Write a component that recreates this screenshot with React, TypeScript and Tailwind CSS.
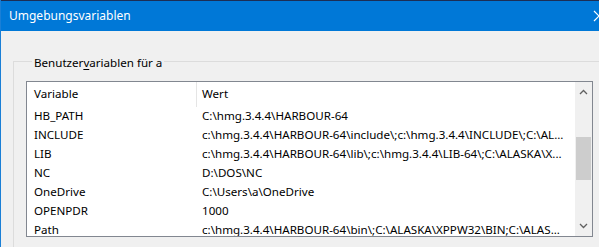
import React from "react";

const rows: [string, string][] = [
  ["HB_PATH", "C:\\hmg.3.4.4\\HARBOUR-64"],
  ["INCLUDE", "c:\\hmg.3.4.4\\HARBOUR-64\\include\\;c:\\hmg.3.4.4\\INCLUDE\\;C:\\AL..."],
  ["LIB", "c:\\hmg.3.4.4\\HARBOUR-64\\lib\\;c:\\hmg.3.4.4\\LIB-64\\;C:\\ALASKA\\X..."],
  ["NC", "D:\\DOS\\NC"],
  ["OneDrive", "C:\\Users\\a\\OneDrive"],
  ["OPENPDR", "1000"],
  ["Path", "c:\\hmg.3.4.4\\HARBOUR-64\\bin\\;C:\\ALASKA\\XPPW32\\BIN;C:\\ALAS..."],
];

export default function App() {
  return (
    <div
      className="w-[599px] h-[247px] overflow-hidden bg-[#f0f0f0] flex flex-col border-l border-[#1a7fd6] text-[11.6px] text-black"
      style={{ fontFamily: '"Noto Sans", "Open Sans", sans-serif' }}
    >
      <div className="h-px bg-[#1c2e55] shrink-0" />
      <div className="h-[30px] shrink-0 bg-[#0078d7] flex items-center justify-between pl-[8px] text-white text-[12px] relative">
        <span className="leading-none">Umgebungsvariablen</span>
        <svg className="absolute right-[-6px] top-[9px]" width="12" height="12" viewBox="0 0 12 12">
          <path d="M1 1 L11 11 M11 1 L1 11" stroke="white" strokeWidth="1.2" />
        </svg>
      </div>
      <fieldset className="ml-[12px] mt-[24px] mr-[-10px] border border-[#dcdcdc] pl-[12px] pr-[15px] pb-[20px] pt-[12px]">
        <legend className="ml-[6px] px-[2px] leading-none pt-[2px]">
          Benutzer<span className="underline underline-offset-2">v</span>ariablen für a
        </legend>
        <div className="h-[156px] border border-[#828790] bg-white flex">
          <div className="flex-1 flex flex-col overflow-hidden">
            <div className="h-[25px] flex items-center shrink-0">
              <div className="w-[170px] h-full pl-[7px] flex items-center border-r border-[#e5e5e5]">Variable</div>
              <div className="pl-[5px]">Wert</div>
            </div>
            {rows.map(([k, v]) => (
              <div key={k} className="h-[19px] flex items-center shrink-0 whitespace-nowrap">
                <div className="w-[170px] pl-[7px]">{k}</div>
                <div className="pl-[5px]">{v}</div>
              </div>
            ))}
          </div>
          <div className="w-[17px] bg-[#f0f0f0] flex flex-col items-center shrink-0">
            <div className="h-[17px] flex items-center justify-center mt-[2px]">
              <svg width="9" height="6" viewBox="0 0 9 6">
                <path d="M1 5 L4.5 1.5 L8 5" stroke="#606060" strokeWidth="1.3" fill="none" />
              </svg>
            </div>
            <div className="mt-[36px] w-[15px] h-[43px] bg-[#cdcdcd]" />
            <div className="flex-1" />
            <div className="h-[17px] flex items-center justify-center mb-[1px]">
              <svg width="9" height="6" viewBox="0 0 9 6">
                <path d="M1 1 L4.5 4.5 L8 1" stroke="#606060" strokeWidth="1.3" fill="none" />
              </svg>
            </div>
          </div>
        </div>
      </fieldset>
    </div>
  );
}
